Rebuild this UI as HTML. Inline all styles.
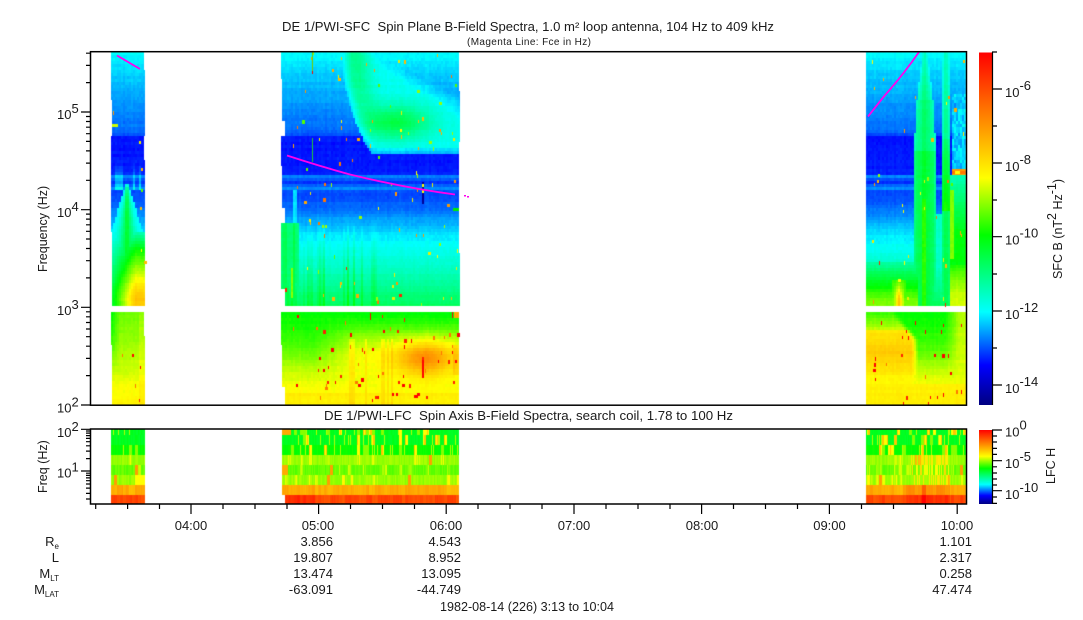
<!DOCTYPE html>
<html><head><meta charset="utf-8"><style>
html,body{margin:0;padding:0;background:#fff;width:1083px;height:620px;overflow:hidden}
canvas,svg{position:absolute;left:0;top:0}
text{font-family:"Liberation Sans",Arial,sans-serif;font-size:13px;fill:#1a1a1a;white-space:pre}
</style></head><body>
<canvas id="c" width="1083" height="620"></canvas>
<svg width="1083" height="620" viewBox="0 0 1083 620" xmlns="http://www.w3.org/2000/svg">
<defs>
<linearGradient id="g1" x1="0" y1="0" x2="0" y2="1">
<stop offset="0" stop-color="#f00"/><stop offset=".356" stop-color="#ff0"/><stop offset=".518" stop-color="#0f0"/><stop offset=".736" stop-color="#0ff"/><stop offset=".887" stop-color="#00f"/><stop offset="1" stop-color="#000080"/>
</linearGradient>
</defs>
<!-- magenta lines -->
<g fill="none" stroke="#f0e" stroke-width="1.8">
<path d="M117 55.5L140 69"/>
<path d="M287 155.5C310 163 330 169 350 174.5C385 183 420 190 455 194.5"/>
<path d="M868 116.5C875 108 880 101 886 94C895 84 905 72 919 52"/>
</g>
<rect x="464" y="195" width="2" height="1.5" fill="#f0e"/><rect x="467" y="196" width="2" height="1.5" fill="#f0e"/>
<!-- frames -->
<g fill="none" stroke="#000" stroke-width="1.5">
<rect x="90.5" y="51.7" width="876" height="353.5"/>
<rect x="90.5" y="429" width="876" height="75"/>
</g>
<!-- colorbars -->
<rect x="979" y="52.5" width="13" height="352.5" fill="url(#g1)"/>
<rect x="979" y="430" width="13" height="74" fill="url(#g1)"/>
<g fill="none" stroke="#000" stroke-width="1.2">
<path d="M992 52h5M992 89h10M992 126h5M992 163h10M992 200h5M992 236.7h10M992 274h5M992 311h10M992 348h5M992 385h10"/>
<path d="M992.5 52V405M992.5 430V504"/>
<path d="M992 430h10M992 436h5M992 442h5M992 448.4h5M992 454.4h5M992 460.7h10M992 466.8h5M992 473h5M992 479h5M992 485h5M992 490.7h10M992 497h5M992 503.4h5"/>
<!-- main y ticks -->
<path d="M81 405h9M81 307.3h9M81 209.7h9M81 112h9"/>
<path d="M86 375.6h4M86 358.4h4M86 346.2h4M86 336.7h4M86 329h4M86 322.5h4M86 316.8h4M86 311.8h4M86 277.9h4M86 260.7h4M86 248.5h4M86 239h4M86 231.3h4M86 224.8h4M86 219.1h4M86 214.1h4M86 180.3h4M86 163.1h4M86 150.9h4M86 141.4h4M86 133.7h4M86 127.2h4M86 121.5h4M86 116.5h4M86 82.6h4M86 65.4h4M86 53.2h4"/>
<!-- lfc y ticks -->
<path d="M81 429.3h9M81 471h9"/>
<path d="M86 431h4M86 433.1h4M86 435.6h4M86 438.4h4M86 441.7h4M86 445.8h4M86 451.1h4M86 458.6h4M86 473.2h4M86 475.4h4M86 477.9h4M86 480.7h4M86 484h4M86 488.1h4M86 493.4h4M86 499h4"/>
<!-- x ticks -->
<path d="M191 504v10M318.6 504v10M446.2 504v10M574 504v10M701.6 504v10M829.4 504v10M957.2 504v10"/>
<path d="M95.7 504v5M127.6 504v5M159.5 504v5M223 504v5M255 504v5M287 504v5M350.5 504v5M382.5 504v5M414.5 504v5M478 504v5M510 504v5M542 504v5M606 504v5M638 504v5M670 504v5M733.5 504v5M765.5 504v5M797.5 504v5M861.5 504v5M893.5 504v5M925.5 504v5"/>
</g>
<!-- titles -->
<text x="528" y="31" text-anchor="middle" textLength="492" lengthAdjust="spacingAndGlyphs">DE 1/PWI-SFC  Spin Plane B-Field Spectra, 1.0 m² loop antenna, 104 Hz to 409 kHz</text>
<text x="529" y="45" text-anchor="middle" style="font-size:10px" textLength="124" lengthAdjust="spacing">(Magenta Line: Fce in Hz)</text>
<text x="528.5" y="420" text-anchor="middle" textLength="409" lengthAdjust="spacingAndGlyphs">DE 1/PWI-LFC  Spin Axis B-Field Spectra, search coil, 1.78 to 100 Hz</text>
<!-- y labels -->
<text x="57" y="119">10<tspan dy="-6">5</tspan></text>
<text x="57" y="217">10<tspan dy="-6">4</tspan></text>
<text x="57" y="315">10<tspan dy="-6">3</tspan></text>
<text x="57" y="412.5">10<tspan dy="-6">2</tspan></text>
<text x="57" y="437">10<tspan dy="-6">2</tspan></text>
<text x="57" y="477.5">10<tspan dy="-6">1</tspan></text>
<text transform="translate(47 272) rotate(-90)" style="font-size:12.5px">Frequency (Hz)</text>
<text transform="translate(47 493) rotate(-90)" style="font-size:12.5px">Freq (Hz)</text>
<!-- colorbar labels -->
<text x="1005" y="97">10<tspan dy="-7">-6</tspan></text>
<text x="1005" y="171">10<tspan dy="-7">-8</tspan></text>
<text x="1005" y="244.5">10<tspan dy="-7">-10</tspan></text>
<text x="1005" y="319">10<tspan dy="-7">-12</tspan></text>
<text x="1005" y="393">10<tspan dy="-7">-14</tspan></text>
<text x="1005" y="436.5">10<tspan dy="-7">0</tspan></text>
<text x="1005" y="468">10<tspan dy="-7">-5</tspan></text>
<text x="1005" y="499">10<tspan dy="-7">-10</tspan></text>
<text transform="translate(1062 279) rotate(-90)" style="font-size:12.5px">SFC B (nT<tspan dy="-6">2</tspan><tspan dy="6"> Hz</tspan><tspan dy="-6">-1</tspan><tspan dy="6">)</tspan></text>
<text transform="translate(1055 484) rotate(-90)" style="font-size:12.5px">LFC H</text>
<!-- time labels -->
<g text-anchor="middle" style="font-size:12.5px">
<text x="191" y="530" text-anchor="middle">04:00</text>
<text x="318" y="530" text-anchor="middle">05:00</text>
<text x="446" y="530" text-anchor="middle">06:00</text>
<text x="574" y="530" text-anchor="middle">07:00</text>
<text x="702" y="530" text-anchor="middle">08:00</text>
<text x="829.5" y="530" text-anchor="middle">09:00</text>
<text x="957" y="530" text-anchor="middle">10:00</text>
</g>
<g text-anchor="end">
<text x="59" y="546" text-anchor="end">R<tspan dy="3" style="font-size:8px">e</tspan></text>
<text x="59" y="562" text-anchor="end">L</text>
<text x="59" y="578" text-anchor="end">M<tspan dy="3" style="font-size:8px">LT</tspan></text>
<text x="59" y="594" text-anchor="end">M<tspan dy="3" style="font-size:8px">LAT</tspan></text>
<text x="333" y="546" text-anchor="end">3.856</text>
<text x="333" y="562" text-anchor="end">19.807</text>
<text x="333" y="578" text-anchor="end">13.474</text>
<text x="333" y="594" text-anchor="end">-63.091</text>
<text x="461" y="546" text-anchor="end">4.543</text>
<text x="461" y="562" text-anchor="end">8.952</text>
<text x="461" y="578" text-anchor="end">13.095</text>
<text x="461" y="594" text-anchor="end">-44.749</text>
<text x="972" y="546" text-anchor="end">1.101</text>
<text x="972" y="562" text-anchor="end">2.317</text>
<text x="972" y="578" text-anchor="end">0.258</text>
<text x="972" y="594" text-anchor="end">47.474</text>
</g>
<text x="440" y="611" textLength="174" lengthAdjust="spacingAndGlyphs">1982-08-14 (226) 3:13 to 10:04</text>
</svg>
<script>
(function(){
var ctx=document.getElementById('c').getContext('2d');
function h(a,b){var s=Math.sin(a*127.1+b*311.7+1.3)*43758.5453;return s-Math.floor(s);}
function cl(v){return v<0?0:v>1?1:v;}
function mix(a,b,t){return a+(b-a)*t;}
function T(t,y){for(var i=1;i<t.length;i++){if(y<=t[i][0]){var p=t[i-1];return mix(p[1],t[i][1],(y-p[0])/(t[i][0]-p[0]));}}return t[t.length-1][1];}
var S=[[405,[0,0,128]],[365,[0,0,255]],[312,[0,255,255]],[235,[0,255,0]],[178,[255,255,0]],[52,[255,0,0]]];
function cm(c){c=Math.max(52,Math.min(405,c));for(var i=1;i<S.length;i++){if(c>=S[i][0]){var a=S[i-1],b=S[i],t=(a[0]-c)/(a[0]-b[0]);return 'rgb('+Math.round(mix(a[1][0],b[1][0],t))+','+Math.round(mix(a[1][1],b[1][1],t))+','+Math.round(mix(a[1][2],b[1][2],t))+')';}}return '#f00';}
var U=[[52,311],[60,315],[75,322],[100,332],[118,338],[134,345],[136,361],[165,360],[175,357],[176,338],[179,338],[180,356],[185,354],[186,336],[190,336],[191,350],[205,345],[215,336],[225,326],[235,317],[245,310],[260,300],[280,285],[306,262]];
var L=[[312,236],[330,228],[350,216],[370,192],[385,180],[405,172]];
function edge(b,y){
 if(b==0){var l=y<98?111:y<135?112:y<185?111:y<230?111:112;
  if(y>306)l=y<345?111:112;var r=(y<70||(y>135&&y<160))?144:145;if(y>306)r=y<335?144:145;return [l,r];}
 if(b==1){var l2;
  if(y<77)l2=281;else if(y<120)l2=282;else if(y<135)l2=285;else if(y<166)l2=281;else if(y<208)l2=282;else if(y<221)l2=285;else if(y<289)l2=281;else if(y<306)l2=285;
  else if(y<345)l2=281;else if(y<385)l2=282;else l2=285;
  return [l2,(y>88&&y<140)||(y>250&&y<306)?460:459];}
 return [866,966];
}
function up(b,x,y,col){
 var c=T(U,y),s,t,f;
 if(b==0){
  if(y>160&&y<190){var q=Math.abs(x-128);if(h(col,3)>.5&&q<14)c-=30*(y-160)/30;}
  if(y>180){var w=(y-180)/65*20;var d=Math.abs(x-127)/Math.max(w,1);if(d<1){c=Math.min(c,312-(1-d)*(1-d)*70);}}
  if(y>232){f=cl((x-113)/22);
   var lf=y<250?mix(312,290,(y-232)/18):mix(290,245,cl((y-250)/45));
   var rt=y<250?mix(290,235,(y-232)/18):mix(235,150,cl((y-250)/45));
   c=Math.min(c,mix(lf,rt,f));}
 }
 if(b==1){
  var Lf=342+28*Math.pow((y-52)/100,2),Rr=395+(y-52)*1.5;
  var e=Math.min((x-Lf)/9,(Rr-x)/40,(154-y)/8);
  if(e>0){s=cl(e);
   var core=Math.exp(-Math.pow((x-397)/34,2)-Math.pow((y-122)/17,2));
   var ridge=Math.exp(-Math.pow((x-Lf-14)/14,2))*cl((125-y)/60+.3);
   var tg=mix(330,308,s)-core*52-ridge*30;c=Math.min(c,tg);}
  if(y>215&&x<380){s=h(col,7);if(s>.55)c-=(s-.4)*45*cl((y-215)/60);}
  if(x<300&&y>222){c=Math.min(c,272-(h(col,9)*15));}
  if(x>291&&x<294&&y>268&&y<298)c=205;
  if(x>292&&x<297&&y>190&&y<222)c=Math.min(c,318);
 }
 if(b==2){
  var wd=y<100?mix(3,8,(y-52)/48):y<150?mix(8,11,(y-100)/50):11;
  var d1=Math.abs(x-925)/wd;
  if(d1<1){var tt=y<100?mix(300,280,(y-52)/48):y<150?272:255;c=Math.min(c,tt+d1*d1*28-h(col,4)*8);if(x>922&&x<926&&y>200&&h(col,4)>.5)c-=22;}
  var d2=Math.abs(x-946)/(y<150?4:5);
  if(d2<1){c=Math.min(c,(y<140?292-((y-52)*.2):y<210?mix(265,228,(y-140)/70):258)+d2*d2*28);}
  if(y>215&&x>932&&x<943)c=Math.min(c,296);
  if(x>952&&y>95&&y<170){c=Math.min(c,320+(h(col,Math.floor(y/4))-.5)*26);}
  if(x>951&&y>170&&y<174)c=130;
  if(x>950&&y>175){c=Math.min(c,y<265?mix(290,238,cl((y-175)/60)):mix(228,188,cl((y-265)/30)));}
  if(x>950&&x<954&&y>190&&y<260)c=Math.min(c,205);
  if(x<918&&y>262){t=cl((y-262)/38);c=Math.min(c,mix(285,208,t));}
  if(y>280){var q2=Math.abs(x-899)/7;if(q2<1)c=Math.min(c,mix(225,150,(1-q2)*cl((y-280)/18)));}
 }
 return c;
}
function low(b,x,y,col){
 var c=T(L,y),t,f;
 if(b==0){
  f=cl((x-112)/8);
  c=mix(c,Math.min(c,212-(y-312)*.38),f);
  if(x>138)c-=8;
  c=Math.max(c,150);
 }
 if(b==1){
  f=cl((x-315)/45)*cl((y-318)/18);
  c=mix(c,Math.min(c,208-cl((y-330)/25)*28),f);
  if(x>340&&x<395&&y>340&&h(col,5)>.5)c-=14;
  c-=58*Math.exp(-Math.pow((x-425)/28,2)-Math.pow((y-358)/17,2));
  if(x>452&&y>345&&y<375)c-=15;
  if(y>392)c=Math.min(c,170);
 }
 if(b==2){
  var edgeX=Math.min(912,890+(y-312)*.8);
  f=cl((edgeX+6-x)/6);
  var a;
  if(y<330)a=mix(225,190,(y-312)/18);
  else if(y<375)a=mix(168,152,1-Math.abs(y-352)/23);
  else a=175;
  c=mix(c,Math.min(c,a),f);
  if(x>945){t=cl((x-945)/15);c=mix(c,Math.min(c,195-(y-312)*.15),t);}
  if(y>385)c=Math.min(c,170);
 }
 return c;
}
var blocks=[[111,146],[281,461],[866,966]];
var bands=[[52,306,up],[312,405,low]];
for(var bi=0;bi<3;bi++){
 for(var bn=0;bn<2;bn++){
  var B=bands[bn];
  for(var y=B[0];y<B[1];y+=3){
   var row=Math.floor(y/3),hh=Math.min(3,B[1]-y),rn=(h(row,bi)-.5)*3.5;
   for(var x=blocks[bi][0];x<blocks[bi][1];x+=2){
    var ed=edge(bi,y);
    if(x+2<=ed[0]||x>=ed[1])continue;
    var xs=Math.max(x,ed[0]),xe=Math.min(x+2,ed[1]);
    var col=Math.floor(x/2);
    var c=B[2](bi,x+1,y+1.5,col);
    c+=rn+(h(col,row*3+bi)-.5)*4.5+(h(col,bi+20)-.5)*3;
    ctx.fillStyle=cm(c);
    ctx.fillRect(xs,y,xe-xs,hh);
   }
  }
 }
}
// speckles
var cfg=[[112,145,52,306,7,0],[112,145,312,405,5,1],[284,458,52,306,100,0],[284,458,312,405,60,1],[868,964,52,306,36,0],[868,964,312,405,28,1]];
var UC=['#ff0','#fa0','#f90','#9f0','#5f0','#f70','#ee0','#fb0'],LC=['#f00','#f00','#f20','#f70'];
var n=0;
cfg.forEach(function(g){
 for(var i=0;i<g[4];i++){n++;
  var sx=Math.floor(mix(g[0],g[1],h(n,1))),sy=Math.floor(mix(g[2],g[3],h(n,2))/3)*3;
  var w=h(n,3)<.6?1:h(n,3)<.9?2:3,he=h(n,4)<.7?3:4;
  var cs=g[5]?LC:UC;
  var col=cs[Math.floor(h(n,5)*cs.length)];
  if(!g[5]&&sy>255&&h(n,6)<.3)col='#f20';
  ctx.fillStyle=col;ctx.fillRect(sx,sy,w,he);
 }
});
function R(col,x,y,w,hh){ctx.fillStyle=col;ctx.fillRect(x,y,w,hh);}
R('#7c0',312,52,1,21);R('#f00',312,71,1,3);R('#2c3',312,138,1,24);
R('#cf0',112,124,6,3);R('#009',422,182,2,22);R('#ff0',422,184,2,3);R('#ff0',422,190,2,3);
R('#f00',422,360,2,18);R('#f00',370,313,1,7);R('#fa0',454,312,5,6);R('#f00',452,312,1,6);
R('#f00',414,395,4,3);R('#0e0',453,208,6,3);
R('#f70',952,171,14,3);R('#ff0',955,171,5,3);
// LFC
var LB=[[429,435,245,1],[435,445,245,1],[445,455,235,1],[455,465,201,2],[465,475,213,2],[475,485,201,2],[485,495,138,3],[495,504,88,3]];
var LE=[[111,145],[282,459],[866,966]];
LB.forEach(function(bd,bi2){
 LE.forEach(function(E,ei){
  for(var x=E[0];x<E[1];x++){
   var v=bd[2];var r=h(x,bi2*7+3);var r2=h(Math.floor(x/3),bi2+11);
   if(bd[3]==1){if(r2>.88)v=r>.5?178:150;else if(r2>.8)v=205;else if(r>.92)v=195;else v+=(r-.5)*8;if(ei==0&&r2>.82)v=bd[2]+(r-.5)*10;}
   if(bd[3]==2){if(r2>.75)v-=r*28;else v+=(r-.5)*10;if(ei==2&&x>910&&x<950&&r>.4)v-=35;if(r2>.97)v=130;}
   if(bd[3]==3){v+=(r2-.5)*16+(r-.5)*6;if(ei==2&&x>905&&x<950)v-=14;if(ei==2&&x>921&&x<926)v-=25;if(ei==1&&x<315&&bi2==7)v-=15;}
   if(ei==0&&bi2==5&&x>134)v=178;
   ctx.fillStyle=cm(v);ctx.fillRect(x,bd[0],1,bd[1]-bd[0]);
  }
 });
});
R('#fa0',282,429,9,6);R('#fa0',282,465,6,10);R('#fff',281,485,1,19);R('#fff',282,495,3,9);
})();
</script>
</body></html>
